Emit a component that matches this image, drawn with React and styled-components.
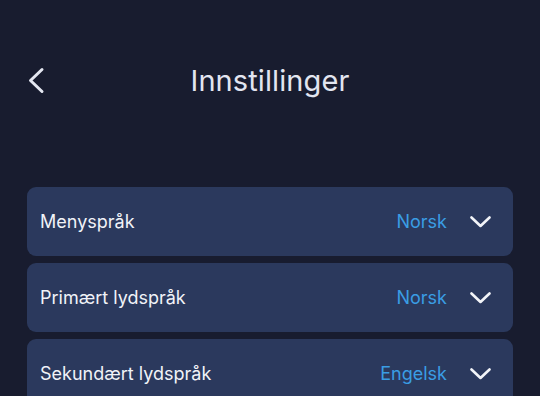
import React from 'react'
import styled, { createGlobalStyle } from 'styled-components'

const GlobalStyle = createGlobalStyle`
  html, body {
    margin: 0;
    padding: 0;
    background: #181c2f;
  }
  body {
    font-family: Inter, "Noto Sans", "Liberation Sans", sans-serif;
    -webkit-font-smoothing: antialiased;
  }
`

const settings = [
  { label: 'Menyspråk', value: 'Norsk' },
  { label: 'Primært lydspråk', value: 'Norsk' },
  { label: 'Sekundært lydspråk', value: 'Engelsk' },
]

const App = () => {
  return (
    <Page>
      <GlobalStyle />
      <Header>
        <BackButton aria-label="Tilbake">
          <svg width="18" height="27" viewBox="0 0 18 27" fill="none">
            <path d="M15 2.5L3.5 13.5L15 24.5" stroke="#e4e7f1" strokeWidth="3" strokeLinecap="round" strokeLinejoin="round" />
          </svg>
        </BackButton>
        <Title>Innstillinger</Title>
        <span />
      </Header>

      <List>
        {settings.map((s) => (
          <Row key={s.label}>
            <Label>{s.label}</Label>
            <Value>{s.value}</Value>
            <Chevron>
              <svg width="21" height="12" viewBox="0 0 21 12" fill="none">
                <path d="M1.5 1.5L10.5 10L19.5 1.5" stroke="#f2f4f8" strokeWidth="2.6" strokeLinecap="round" strokeLinejoin="round" />
              </svg>
            </Chevron>
          </Row>
        ))}
      </List>
    </Page>
  )
}

export default App

const Page = styled.div`
  width: 540px;
  height: 396px;
  overflow: hidden;
  padding: 0 27px;
  box-sizing: border-box;
  background: #181c2f;
`

const Header = styled.header`
  display: grid;
  grid-template-columns: 40px 1fr 40px;
  align-items: center;
  height: 65px;
  padding-top: 48px;
`

const BackButton = styled.button`
  display: flex;
  align-items: center;
  justify-content: flex-start;
  background: none;
  border: 0;
  padding: 0;
  cursor: pointer;
`

const Title = styled.h1`
  margin: 0;
  text-align: center;
  font-size: 29px;
  font-weight: 400;
  color: #e2e5f0;
  letter-spacing: 0.1px;
`

const List = styled.div`
  display: flex;
  flex-direction: column;
  gap: 7px;
  margin-top: 74px;
`

const Row = styled.div`
  display: flex;
  align-items: center;
  height: 69px;
  padding: 0 22px 0 13px;
  border-radius: 9px;
  background: #2b395d;
`

const Label = styled.span`
  flex: 1;
  font-size: 18px;
  color: #f1f3f8;
`

const Value = styled.span`
  font-size: 18px;
  color: #3a9de4;
  margin-right: 23px;
`

const Chevron = styled.span`
  display: flex;
  align-items: center;
`
